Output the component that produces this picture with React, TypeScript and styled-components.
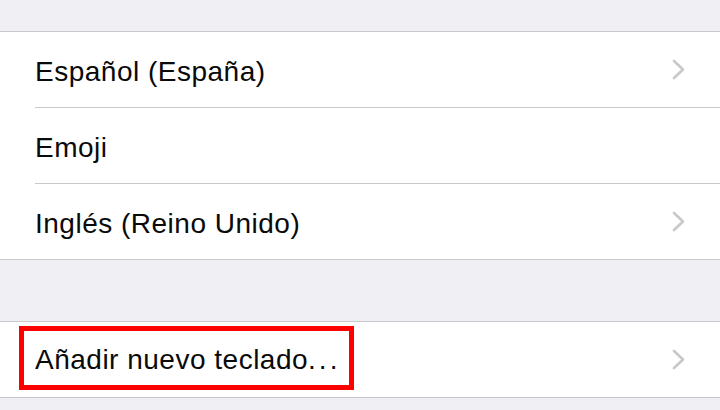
import * as React from "react"
import styled, { createGlobalStyle } from "styled-components"

const GlobalStyle = createGlobalStyle`
  html, body {
    margin: 0;
    padding: 0;
    background: #efeff4;
  }
  body {
    font-family: "Liberation Sans", Arial, sans-serif;
    -webkit-font-smoothing: antialiased;
  }
`

const Page = styled.div`
  width: 720px;
  height: 410px;
  overflow: hidden;
  background: #efeff4;
  padding-top: 31px;
  box-sizing: border-box;
`

const Group = styled.div<{ $gapAfter?: number }>`
  background: #ffffff;
  border-top: 1px solid #c8c7cc;
  border-bottom: 1px solid #c8c7cc;
  margin-bottom: ${p => p.$gapAfter ?? 0}px;
`

const Row = styled.div`
  padding-left: 35px;
`

const RowInner = styled.div<{ $last?: boolean }>`
  height: 75px;
  display: flex;
  align-items: center;
  justify-content: space-between;
  padding-right: 35px;
  border-bottom: ${p => (p.$last ? "none" : "1px solid #c8c7cc")};
`

const Label = styled.span`
  font-size: 28px;
  letter-spacing: 0.5px;
  color: #0a0a0a;
  padding-top: 5px;
`

const Dots = styled.span`
  letter-spacing: 3px;
`

const Highlight = styled.span`
  display: inline-flex;
  align-items: center;
  margin-left: -16px;
  margin-top: -4px;
  padding: 0 9px 0 11px;
  height: 54px;
  border: 5px solid #ff0000;
`

const Chevron = () => (
  <svg width="13" height="21" viewBox="0 0 13 21">
    <polyline
      points="2,2 11,10.5 2,19"
      fill="none"
      stroke="#c7c7cc"
      strokeWidth="2.6"
      strokeLinecap="round"
      strokeLinejoin="round"
    />
  </svg>
)

const keyboards = [
  { name: "Español (España)", more: true },
  { name: "Emoji", more: false },
  { name: "Inglés (Reino Unido)", more: true },
]

export default function App() {
  return (
    <>
      <GlobalStyle />
      <Page>
        <Group $gapAfter={61}>
          {keyboards.map((k, i) => (
            <Row key={k.name}>
              <RowInner $last={i === keyboards.length - 1}>
                <Label>{k.name}</Label>
                {k.more && <Chevron />}
              </RowInner>
            </Row>
          ))}
        </Group>
        <Group>
          <Row>
            <RowInner $last>
              <Highlight>
                <Label>
                  Añadir nuevo teclado<Dots>...</Dots>
                </Label>
              </Highlight>
              <Chevron />
            </RowInner>
          </Row>
        </Group>
      </Page>
    </>
  )
}
